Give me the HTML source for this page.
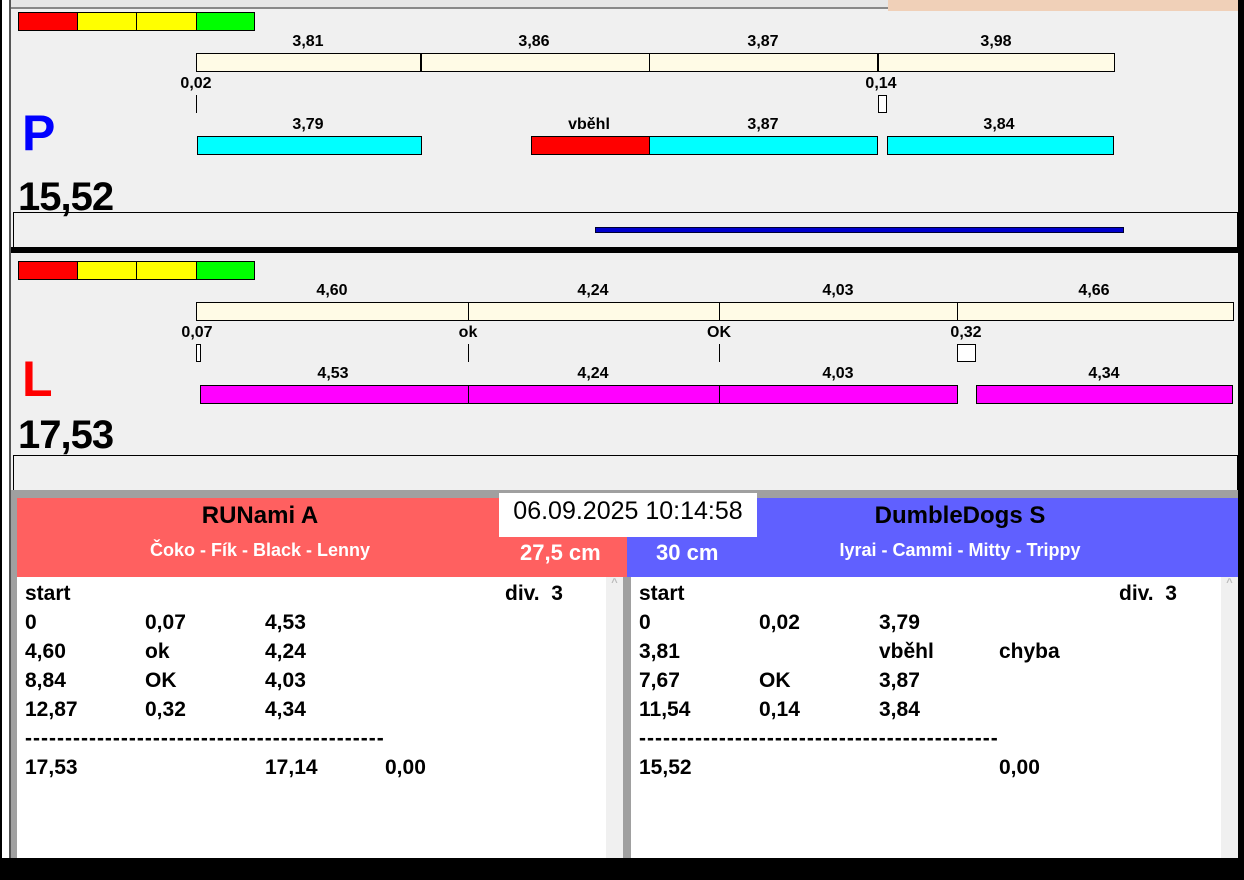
<!DOCTYPE html><html><head><meta charset="utf-8"><style>
*{margin:0;padding:0;box-sizing:border-box}
body{width:1244px;height:880px;background:#f0f0f0;position:relative;overflow:hidden;font-family:"Liberation Sans",Arial,sans-serif;font-weight:bold}
div{position:absolute}
.b{border:1px solid #000}
.t{font-size:16px;transform:translateX(-50%);white-space:nowrap;color:#000;margin-top:2px}
.r{font-size:21px;white-space:nowrap;margin-top:1px}
.d{letter-spacing:1px}
</style></head><body>
<div style="left:0;top:0;width:11px;height:880px;background:#fff;border-left:2px solid #000;border-right:2px solid #555"></div>
<div style="left:1238px;top:0;width:6px;height:880px;background:#000"></div>
<div style="left:11px;top:0;width:877px;height:9px;background:#e6e6e6;border-bottom:2px solid #888"></div>
<div style="left:888px;top:0;width:350px;height:11px;background:#f0d0b8"></div>

<!-- P panel -->
<div class="b" style="left:18px;top:12px;width:60px;height:19px;background:#f00"></div>
<div class="b" style="left:77px;top:12px;width:60px;height:19px;background:#ff0"></div>
<div class="b" style="left:136px;top:12px;width:61px;height:19px;background:#ff0"></div>
<div class="b" style="left:196px;top:12px;width:59px;height:19px;background:#0f0"></div>
<div class="t" style="left:308px;top:31px">3,81</div><div class="t" style="left:534px;top:31px">3,86</div><div class="t" style="left:763px;top:31px">3,87</div><div class="t" style="left:996px;top:31px">3,98</div>
<div class="b" style="left:196px;top:53px;width:919px;height:19px;background:#fffbe6"></div>
<div style="left:420px;top:53px;width:2px;height:19px;background:#000"></div><div style="left:649px;top:53px;width:1px;height:19px;background:#000"></div><div style="left:877px;top:53px;width:2px;height:19px;background:#000"></div>
<div class="t" style="left:196px;top:73px">0,02</div><div class="t" style="left:881px;top:73px">0,14</div>
<div style="left:196px;top:95px;width:1px;height:18px;background:#000"></div>
<div class="b" style="left:878px;top:95px;width:9px;height:18px;background:#fff"></div>
<div style="left:22px;top:104px;font-size:50px;color:#00f">P</div>
<div class="t" style="left:308px;top:114px">3,79</div><div class="t" style="left:589px;top:114px">vběhl</div><div class="t" style="left:763px;top:114px">3,87</div><div class="t" style="left:999px;top:114px">3,84</div>
<div class="b" style="left:197px;top:136px;width:225px;height:19px;background:#0ff"></div>
<div class="b" style="left:531px;top:136px;width:119px;height:19px;background:#f00"></div>
<div class="b" style="left:649px;top:136px;width:229px;height:19px;background:#0ff"></div>
<div class="b" style="left:887px;top:136px;width:227px;height:19px;background:#0ff"></div>
<div style="left:18px;top:175px;font-size:40px;letter-spacing:-1px">15,52</div>
<div class="b" style="left:13px;top:212px;width:1225px;height:37px"></div>
<div style="left:595px;top:227px;width:529px;height:6px;background:#00c;border:1px solid #003"></div>
<div style="left:11px;top:247px;width:1227px;height:6px;background:#000"></div>

<!-- L panel -->
<div class="b" style="left:18px;top:261px;width:60px;height:19px;background:#f00"></div>
<div class="b" style="left:77px;top:261px;width:60px;height:19px;background:#ff0"></div>
<div class="b" style="left:136px;top:261px;width:61px;height:19px;background:#ff0"></div>
<div class="b" style="left:196px;top:261px;width:59px;height:19px;background:#0f0"></div>
<div class="t" style="left:332px;top:280px">4,60</div><div class="t" style="left:593px;top:280px">4,24</div><div class="t" style="left:838px;top:280px">4,03</div><div class="t" style="left:1094px;top:280px">4,66</div>
<div class="b" style="left:196px;top:302px;width:1038px;height:19px;background:#fffbe6"></div>
<div style="left:468px;top:302px;width:1px;height:19px;background:#000"></div><div style="left:719px;top:302px;width:1px;height:19px;background:#000"></div><div style="left:957px;top:302px;width:1px;height:19px;background:#000"></div>
<div class="t" style="left:197px;top:322px">0,07</div><div class="t" style="left:468px;top:322px">ok</div><div class="t" style="left:719px;top:322px">OK</div><div class="t" style="left:966px;top:322px">0,32</div>
<div class="b" style="left:196px;top:344px;width:5px;height:18px;background:#fff"></div>
<div style="left:468px;top:344px;width:1px;height:18px;background:#000"></div><div style="left:719px;top:344px;width:1px;height:18px;background:#000"></div>
<div class="b" style="left:957px;top:344px;width:19px;height:18px;background:#fff"></div>
<div style="left:22px;top:350px;font-size:50px;color:#f00">L</div>
<div class="t" style="left:333px;top:363px">4,53</div><div class="t" style="left:593px;top:363px">4,24</div><div class="t" style="left:838px;top:363px">4,03</div><div class="t" style="left:1104px;top:363px">4,34</div>
<div class="b" style="left:200px;top:385px;width:758px;height:19px;background:#f0f"></div>
<div style="left:468px;top:385px;width:1px;height:19px;background:#000"></div><div style="left:719px;top:385px;width:1px;height:19px;background:#000"></div>
<div class="b" style="left:976px;top:385px;width:257px;height:19px;background:#f0f"></div>
<div style="left:18px;top:413px;font-size:40px;letter-spacing:-1px">17,53</div>
<div class="b" style="left:13px;top:455px;width:1225px;height:36px"></div>

<!-- bottom -->
<div style="left:11px;top:490px;width:1227px;height:8px;background:#a0a0a0"></div>
<div style="left:11px;top:498px;width:6px;height:360px;background:#a0a0a0"></div>
<div style="left:17px;top:498px;width:610px;height:79px;background:#ff6060"></div>
<div style="left:627px;top:498px;width:611px;height:79px;background:#6060ff"></div>
<div style="left:17px;top:502px;width:486px;text-align:center;font-size:24px">RUNami A</div>
<div style="left:17px;top:540px;width:486px;text-align:center;font-size:18px;color:#fff">Čoko - Fík - Black - Lenny</div>
<div style="left:757px;top:502px;width:406px;text-align:center;font-size:24px">DumbleDogs S</div>
<div style="left:757px;top:540px;width:406px;text-align:center;font-size:18px;color:#fff">Iyrai - Cammi - Mitty - Trippy</div>
<div style="left:499px;top:493px;width:258px;height:44px;background:#fff;font-weight:normal;font-size:25px;text-align:center;line-height:36px">06.09.2025 10:14:58</div>
<div style="left:520px;top:540px;font-size:22px;color:#fff">27,5 cm</div>
<div style="left:656px;top:540px;font-size:22px;color:#fff">30 cm</div>
<div style="left:17px;top:577px;width:589px;height:281px;background:#fff"></div>
<div style="left:606px;top:577px;width:17px;height:281px;background:#f0f0f0;color:#bbb;font-size:11px;text-align:center">^</div>
<div style="left:623px;top:577px;width:8px;height:281px;background:#a0a0a0"></div>
<div style="left:631px;top:577px;width:590px;height:281px;background:#fff"></div>
<div style="left:1221px;top:577px;width:17px;height:281px;background:#f0f0f0;color:#bbb;font-size:11px;text-align:center">^</div>
<div style="left:0;top:858px;width:1244px;height:22px;background:#000"></div>

<div class="r" style="left:25px;top:581px">start</div><div class="r" style="left:505px;top:581px">div.&nbsp; 3</div>
<div class="r" style="left:25px;top:610px">0</div><div class="r" style="left:145px;top:610px">0,07</div><div class="r" style="left:265px;top:610px">4,53</div>
<div class="r" style="left:25px;top:639px">4,60</div><div class="r" style="left:145px;top:639px">ok</div><div class="r" style="left:265px;top:639px">4,24</div>
<div class="r" style="left:25px;top:668px">8,84</div><div class="r" style="left:145px;top:668px">OK</div><div class="r" style="left:265px;top:668px">4,03</div>
<div class="r" style="left:25px;top:697px">12,87</div><div class="r" style="left:145px;top:697px">0,32</div><div class="r" style="left:265px;top:697px">4,34</div>
<div class="r d" style="left:25px;top:726px">---------------------------------------------</div>
<div class="r" style="left:25px;top:755px">17,53</div><div class="r" style="left:265px;top:755px">17,14</div><div class="r" style="left:385px;top:755px">0,00</div>

<div class="r" style="left:639px;top:581px">start</div><div class="r" style="left:1119px;top:581px">div.&nbsp; 3</div>
<div class="r" style="left:639px;top:610px">0</div><div class="r" style="left:759px;top:610px">0,02</div><div class="r" style="left:879px;top:610px">3,79</div>
<div class="r" style="left:639px;top:639px">3,81</div><div class="r" style="left:879px;top:639px">vběhl</div><div class="r" style="left:999px;top:639px">chyba</div>
<div class="r" style="left:639px;top:668px">7,67</div><div class="r" style="left:759px;top:668px">OK</div><div class="r" style="left:879px;top:668px">3,87</div>
<div class="r" style="left:639px;top:697px">11,54</div><div class="r" style="left:759px;top:697px">0,14</div><div class="r" style="left:879px;top:697px">3,84</div>
<div class="r d" style="left:639px;top:726px">---------------------------------------------</div>
<div class="r" style="left:639px;top:755px">15,52</div><div class="r" style="left:999px;top:755px">0,00</div>
</body></html>
